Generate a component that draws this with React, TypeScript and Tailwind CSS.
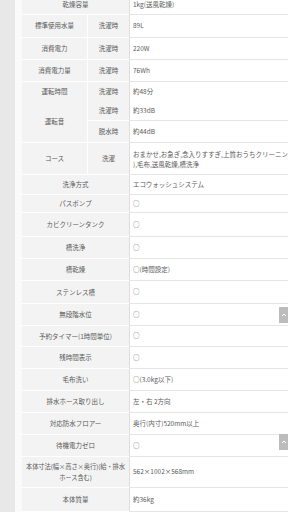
import React from "react";

type RowProps = {
  label?: React.ReactNode;
  sub?: string;
  value: React.ReactNode;
  h: string;
  noBorder?: boolean;
  extra?: string;
};

const labelBg = "bg-[#f3f3f3]";

function Row({ label, sub, value, h, noBorder, extra = "" }: RowProps) {
  const bb = noBorder ? "" : "border-b";
  return (
    <div className={`flex ${h} ${extra}`}>
      {sub !== undefined ? (
        <>
          <div className={`w-[66px] shrink-0 ${labelBg} ${bb} border-white border-r flex items-center justify-center text-center`}>
            {label}
          </div>
          <div className={`w-[41px] shrink-0 ${labelBg} ${bb} border-white flex items-center justify-center`}>
            {sub}
          </div>
        </>
      ) : (
        <div className={`w-[107px] shrink-0 ${labelBg} ${bb} border-white flex items-center justify-center text-center leading-[11px] whitespace-nowrap`}>
          {label}
        </div>
      )}
      <div className={`flex-1 min-w-0 bg-white ${bb} border-[#e6e6e6] border-l border-l-[#dedede] pl-[3px] flex items-center whitespace-nowrap overflow-hidden`}>
        {value}
      </div>
    </div>
  );
}

export default function App() {
  return (
    <div
      className="relative w-[288px] h-[512px] overflow-hidden flex bg-white text-[6.5px] text-[#5a5a5a]"
      style={{ fontFamily: '"Noto Sans CJK JP", "Noto Sans", sans-serif' }}
    >
      <div className="w-[15px] shrink-0 bg-[#e8e8e8]" />
      <div className="w-[7px] shrink-0 bg-[#fafafa]" />
      <div className="flex-1 min-w-0 flex flex-col">
        <Row label="乾燥容量" value="1kg(送風乾燥)" h="h-[20px]" extra="-mt-[5px]" />
        <Row label="標準使用水量" sub="洗濯時" value="89L" h="h-[23px]" />
        <Row label="消費電力" sub="洗濯時" value="220W" h="h-[22px]" />
        <Row label="消費電力量" sub="洗濯時" value="76Wh" h="h-[22px]" />
        <Row label="運転時間" sub="洗濯時" value="約48分" h="h-[19px]" noBorder />
        {/* 運転音 rowspan 2 */}
        <div className="flex h-[42px]">
          <div className={`w-[66px] shrink-0 ${labelBg} border-b border-white border-r flex items-center justify-center`}>
            運転音
          </div>
          <div className="flex-1 min-w-0 flex flex-col">
            <div className="flex h-[20px]">
              <div className={`w-[41px] shrink-0 ${labelBg} border-b border-white flex items-center justify-center`}>
                洗濯時
              </div>
              <div className="flex-1 min-w-0 bg-white border-b border-[#e6e6e6] border-l border-l-[#dedede] pl-[3px] flex items-center whitespace-nowrap">
                約33dB
              </div>
            </div>
            <div className="flex h-[22px]">
              <div className={`w-[41px] shrink-0 ${labelBg} border-b border-white flex items-center justify-center`}>
                脱水時
              </div>
              <div className="flex-1 min-w-0 bg-white border-b border-[#e6e6e6] border-l border-l-[#dedede] pl-[3px] flex items-center whitespace-nowrap">
                約44dB
              </div>
            </div>
          </div>
        </div>
        <Row
          label="コース"
          sub="洗濯"
          h="h-[32px]"
          value={
            <div className="flex flex-col leading-[10px]">
              <span>おまかせ,お急ぎ,念入りすすぎ,上質おうちクリーニング(ドライ</span>
              <span>),毛布,送風乾燥,槽洗浄</span>
            </div>
          }
        />
        <Row label="洗浄方式" value="エコウォッシュシステム" h="h-[20px]" />
        <Row label="パスポンプ" value="○" h="h-[18px]" />
        <Row label="カビクリーンタンク" value="○" h="h-[24px]" />
        <Row label="槽洗浄" value="○" h="h-[22px]" />
        <Row label="槽乾燥" value="○(時間設定)" h="h-[22px]" />
        <Row label="ステンレス槽" value="○" h="h-[23px]" />
        <Row label="無段階水位" value="○" h="h-[22px]" />
        <Row label="予約タイマー(1時間単位)" value="○" h="h-[21px]" />
        <Row label="残時間表示" value="○" h="h-[22px]" />
        <Row label="毛布洗い" value="○(3.0kg以下)" h="h-[22px]" />
        <Row label="排水ホース取り出し" value="左・右 2方向" h="h-[22px]" />
        <Row label="対応防水フロアー" value="奥行(内寸)520mm以上" h="h-[22px]" />
        <Row label="待機電力ゼロ" value="○" h="h-[22px]" />
        <Row
          label={
            <span className="text-[6.3px] tracking-[-0.1px]">
              本体寸法(幅×高さ×奥行)(給・排水
              <br />
              ホース含む)
            </span>
          }
          value="562×1002×568mm"
          h="h-[31px]"
        />
        <Row label="本体質量" value="約36kg" h="h-[24px]" />
      </div>

      <div className="absolute left-[279px] top-[307px] w-[20px] h-[16px] bg-[#bcbcbc] flex items-center pl-[2px]">
        <svg width="6" height="6" viewBox="0 0 6 6">
          <path d="M1 4 L3 2 L5 4" stroke="#fff" strokeWidth="1" fill="none" />
        </svg>
      </div>
      <div className="absolute left-[279px] top-[434px] w-[20px] h-[16px] bg-[#bcbcbc] flex items-center pl-[2px]">
        <svg width="6" height="6" viewBox="0 0 6 6">
          <path d="M1 4 L3 2 L5 4" stroke="#fff" strokeWidth="1" fill="none" />
        </svg>
      </div>
    </div>
  );
}
